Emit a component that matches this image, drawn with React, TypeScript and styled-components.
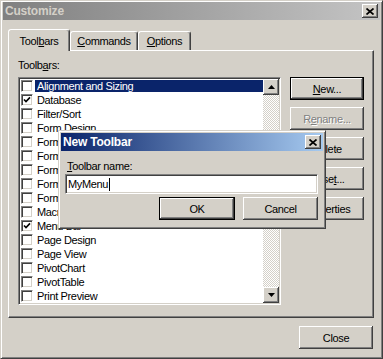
import styled, { createGlobalStyle } from 'styled-components';

const FACE = '#d4d0c8';
const SHADOW = '#808080';
const DARK = '#404040';
const UI_FONT = "'Liberation Sans', Arial, sans-serif";

const GlobalStyle = createGlobalStyle`
  html, body {
    margin: 0;
    padding: 0;
    background: ${FACE};
  }
  body {
    font-family: ${UI_FONT};
    font-size: 11px;
    letter-spacing: -0.35px;
    color: #000;
  }
`;

// outer frame, used by the main window
const Window = styled.div`
  position: relative;
  box-sizing: border-box;
  width: 383px;
  height: 359px;
  display: flex;
  flex-direction: column;
  padding: 1px 2px 2px;
  background: ${FACE};
  border: 1px solid;
  border-color: ${FACE} ${DARK} ${DARK} ${FACE};
  box-shadow: inset 1px 1px #fff, inset -1px -1px ${SHADOW};
`;

const TitleBar = styled.div<{ $active?: boolean }>`
  flex: 0 0 18px;
  display: flex;
  align-items: center;
  justify-content: space-between;
  padding: 0 2px;
  background: ${(p) =>
    p.$active
      ? 'linear-gradient(to right, #0a246a, #a6caf0)'
      : 'linear-gradient(to right, #808080, #c4c4c4)'};
`;

const TitleText = styled.span<{ $active?: boolean }>`
  font-weight: bold;
  font-size: 12px;
  line-height: 14px;
  letter-spacing: -0.2px;
  color: ${(p) => (p.$active ? '#fff' : FACE)};
`;

const CaptionButton = styled.div`
  box-sizing: border-box;
  width: 16px;
  height: 14px;
  display: flex;
  align-items: center;
  justify-content: center;
  background: ${FACE};
  box-shadow: inset -1px -1px ${DARK}, inset 1px 1px #fff, inset -2px -2px ${SHADOW};
`;

const Body = styled.div`
  flex: 1;
  display: flex;
  flex-direction: column;
  padding: 9px 6px 0 5px;
`;

const TabRow = styled.div`
  display: flex;
  align-items: flex-end;
  position: relative;
  z-index: 1;
`;

const Tab = styled.div<{ $selected?: boolean; $width: number }>`
  box-sizing: border-box;
  width: ${(p) => p.$width}px;
  height: ${(p) => (p.$selected ? 22 : 19)}px;
  margin-bottom: ${(p) => (p.$selected ? -1 : 0)}px;
  padding-top: ${(p) => (p.$selected ? 5 : 3)}px;
  text-align: center;
  line-height: 13px;
  background: ${FACE};
  border: 1px solid;
  border-bottom: none;
  border-color: #fff ${DARK} transparent #fff;
  border-radius: 3px 3px 0 0;
  box-shadow: inset -1px 0 ${SHADOW};
`;

const Panel = styled.div`
  box-sizing: border-box;
  height: 268px;
  padding: 8px 9px 0;
  border: 1px solid;
  border-color: #fff ${DARK} ${DARK} #fff;
  box-shadow: inset -1px -1px ${SHADOW};
`;

const FieldLabel = styled.div`
  line-height: 13px;
  margin-bottom: 5px;
`;

const PanelRow = styled.div`
  display: flex;
  gap: 9px;
  align-items: flex-start;
`;

const ListBox = styled.div`
  box-sizing: border-box;
  width: 263px;
  height: 228px;
  display: flex;
  border: 1px solid;
  border-color: ${SHADOW} #fff #fff ${SHADOW};
  box-shadow: inset 1px 1px ${DARK}, inset -1px -1px ${FACE};
  padding: 1px;
`;

const List = styled.div`
  flex: 1;
  background: #fff;
  overflow: hidden;
`;

const Row = styled.div`
  height: 14px;
  display: flex;
  align-items: center;
  white-space: nowrap;
`;

const CheckBox = styled.div`
  box-sizing: border-box;
  flex: 0 0 12px;
  height: 12px;
  margin-left: 1px;
  display: flex;
  align-items: center;
  justify-content: center;
  background: #fff;
  border: 1px solid;
  border-color: ${SHADOW} #fff #fff ${SHADOW};
  box-shadow: inset 1px 1px ${DARK}, inset -1px -1px ${FACE};
`;

const ItemText = styled.span<{ $selected?: boolean }>`
  flex: 1;
  height: 12px;
  line-height: 12px;
  margin-left: 2px;
  padding-left: 2px;
  background: ${(p) => (p.$selected ? '#0a246a' : 'transparent')};
  color: ${(p) => (p.$selected ? '#fff' : '#000')};
`;

const ScrollBar = styled.div`
  flex: 0 0 16px;
  display: flex;
  flex-direction: column;
`;

const ScrollTrack = styled.div`
  flex: 1;
  background: repeating-conic-gradient(#fff 0 25%, ${FACE} 0 50%) 0 0 / 2px 2px;
`;

const ArrowButton = styled.div`
  box-sizing: border-box;
  height: 16px;
  display: flex;
  align-items: center;
  justify-content: center;
  background: ${FACE};
  box-shadow: inset -1px -1px ${DARK}, inset 1px 1px #fff, inset -2px -2px ${SHADOW};
`;

const ButtonColumn = styled.div`
  display: flex;
  flex-direction: column;
  gap: 7px;
`;

const Button = styled.div<{ $width?: number; $default?: boolean; $disabled?: boolean }>`
  box-sizing: border-box;
  width: ${(p) => p.$width ?? 74}px;
  height: 23px;
  display: flex;
  align-items: center;
  justify-content: center;
  background: ${FACE};
  border: ${(p) => (p.$default ? '1px solid #000' : 'none')};
  box-shadow: inset -1px -1px ${DARK}, inset 1px 1px #fff, inset -2px -2px ${SHADOW};
  color: ${(p) => (p.$disabled ? SHADOW : '#000')};
  text-shadow: ${(p) => (p.$disabled ? '1px 1px #fff' : 'none')};
`;

const U = styled.span`
  text-decoration: underline;
  text-underline-offset: 1px;
`;

const Footer = styled.div`
  display: flex;
  justify-content: flex-end;
  margin-top: 8px;
  padding-right: 1px;
`;

// "New Toolbar" dialog lies over the Customize window
const Dialog = styled.div`
  position: absolute;
  left: 57px;
  top: 129px;
  box-sizing: border-box;
  width: 268px;
  height: 99px;
  display: flex;
  flex-direction: column;
  padding: 2px;
  background: ${FACE};
  border: 1px solid;
  border-color: ${FACE} ${DARK} ${DARK} ${FACE};
  box-shadow: inset 1px 1px #fff, inset -1px -1px ${SHADOW};
`;

const DialogBody = styled.div`
  display: flex;
  flex-direction: column;
  padding: 9px 5px 0 4px;
`;

const DialogLabel = styled.div`
  line-height: 13px;
  padding-left: 2px;
  margin-bottom: 1px;
`;

const TextInput = styled.div`
  box-sizing: border-box;
  height: 20px;
  display: flex;
  align-items: center;
  padding-left: 2px;
  background: #fff;
  border: 1px solid;
  border-color: ${SHADOW} #fff #fff ${SHADOW};
  box-shadow: inset 1px 1px ${DARK}, inset -1px -1px ${FACE};
`;

const Caret = styled.span`
  display: inline-block;
  width: 1px;
  height: 13px;
  margin-left: 1px;
  background: #000;
`;

const DialogButtons = styled.div`
  display: flex;
  justify-content: flex-end;
  gap: 8px;
  margin-top: 3px;
`;

const CloseGlyph = () => (
  <svg width="8" height="7" viewBox="0 0 8 7">
    <path d="M0.5 0.5 L7.5 6.5 M7.5 0.5 L0.5 6.5" stroke="#000" strokeWidth="1.7" />
  </svg>
);

const Check = () => (
  <svg width="8" height="8" viewBox="0 0 8 8">
    <polyline points="1,3.5 3,5.6 7,1.4" fill="none" stroke="#000" strokeWidth="1.6" />
  </svg>
);

const Arrow = ({ down }: { down?: boolean }) => (
  <svg width="7" height="4" viewBox="0 0 7 4">
    <polygon points={down ? '0,0 7,0 3.5,4' : '0,4 7,4 3.5,0'} fill="#000" />
  </svg>
);

const toolbars = [
  { name: 'Alignment and Sizing', checked: false },
  { name: 'Database', checked: true },
  { name: 'Filter/Sort', checked: false },
  { name: 'Form Design', checked: false },
  { name: 'Form View', checked: false },
  { name: 'Formatting (Datasheet)', checked: false },
  { name: 'Formatting (Form/Report)', checked: false },
  { name: 'Formatting (Page)', checked: false },
  { name: 'Formatting (PivotTable/PivotChart)', checked: false },
  { name: 'Macro Design', checked: false },
  { name: 'Menu Bar', checked: true },
  { name: 'Page Design', checked: false },
  { name: 'Page View', checked: false },
  { name: 'PivotChart', checked: false },
  { name: 'PivotTable', checked: false },
  { name: 'Print Preview', checked: false },
];

const App = () => {
  return (
    <>
      <GlobalStyle />
      <Window>
        <TitleBar>
          <TitleText>Customize</TitleText>
          <CaptionButton>
            <CloseGlyph />
          </CaptionButton>
        </TitleBar>
        <Body>
          <TabRow>
            <Tab $selected $width={62}>
              Tool<U>b</U>ars
            </Tab>
            <Tab $width={68}>
              <U>C</U>ommands
            </Tab>
            <Tab $width={53}>
              <U>O</U>ptions
            </Tab>
          </TabRow>
          <Panel>
            <FieldLabel>
              Toolb<U>a</U>rs:
            </FieldLabel>
            <PanelRow>
              <ListBox>
                <List>
                  {toolbars.map((t, i) => (
                    <Row key={t.name}>
                      <CheckBox>{t.checked && <Check />}</CheckBox>
                      <ItemText $selected={i === 0}>{t.name}</ItemText>
                    </Row>
                  ))}
                </List>
                <ScrollBar>
                  <ArrowButton>
                    <Arrow />
                  </ArrowButton>
                  <ScrollTrack />
                  <ArrowButton>
                    <Arrow down />
                  </ArrowButton>
                </ScrollBar>
              </ListBox>
              <ButtonColumn>
                <Button $default>
                  <U>N</U>ew...
                </Button>
                <Button $disabled>
                  R<U>e</U>name...
                </Button>
                <Button>
                  <U>D</U>elete
                </Button>
                <Button>
                  Rese<U>t</U>...
                </Button>
                <Button>
                  Pr<U>o</U>perties
                </Button>
              </ButtonColumn>
            </PanelRow>
          </Panel>
          <Footer>
            <Button>Close</Button>
          </Footer>
        </Body>

        <Dialog>
          <TitleBar $active>
            <TitleText $active>New Toolbar</TitleText>
            <CaptionButton>
              <CloseGlyph />
            </CaptionButton>
          </TitleBar>
          <DialogBody>
            <DialogLabel>
              <U>T</U>oolbar name:
            </DialogLabel>
            <TextInput>
              MyMenu
              <Caret />
            </TextInput>
            <DialogButtons>
              <Button $default $width={76}>
                OK
              </Button>
              <Button $width={75}>Cancel</Button>
            </DialogButtons>
          </DialogBody>
        </Dialog>
      </Window>
    </>
  );
};

export default App;
